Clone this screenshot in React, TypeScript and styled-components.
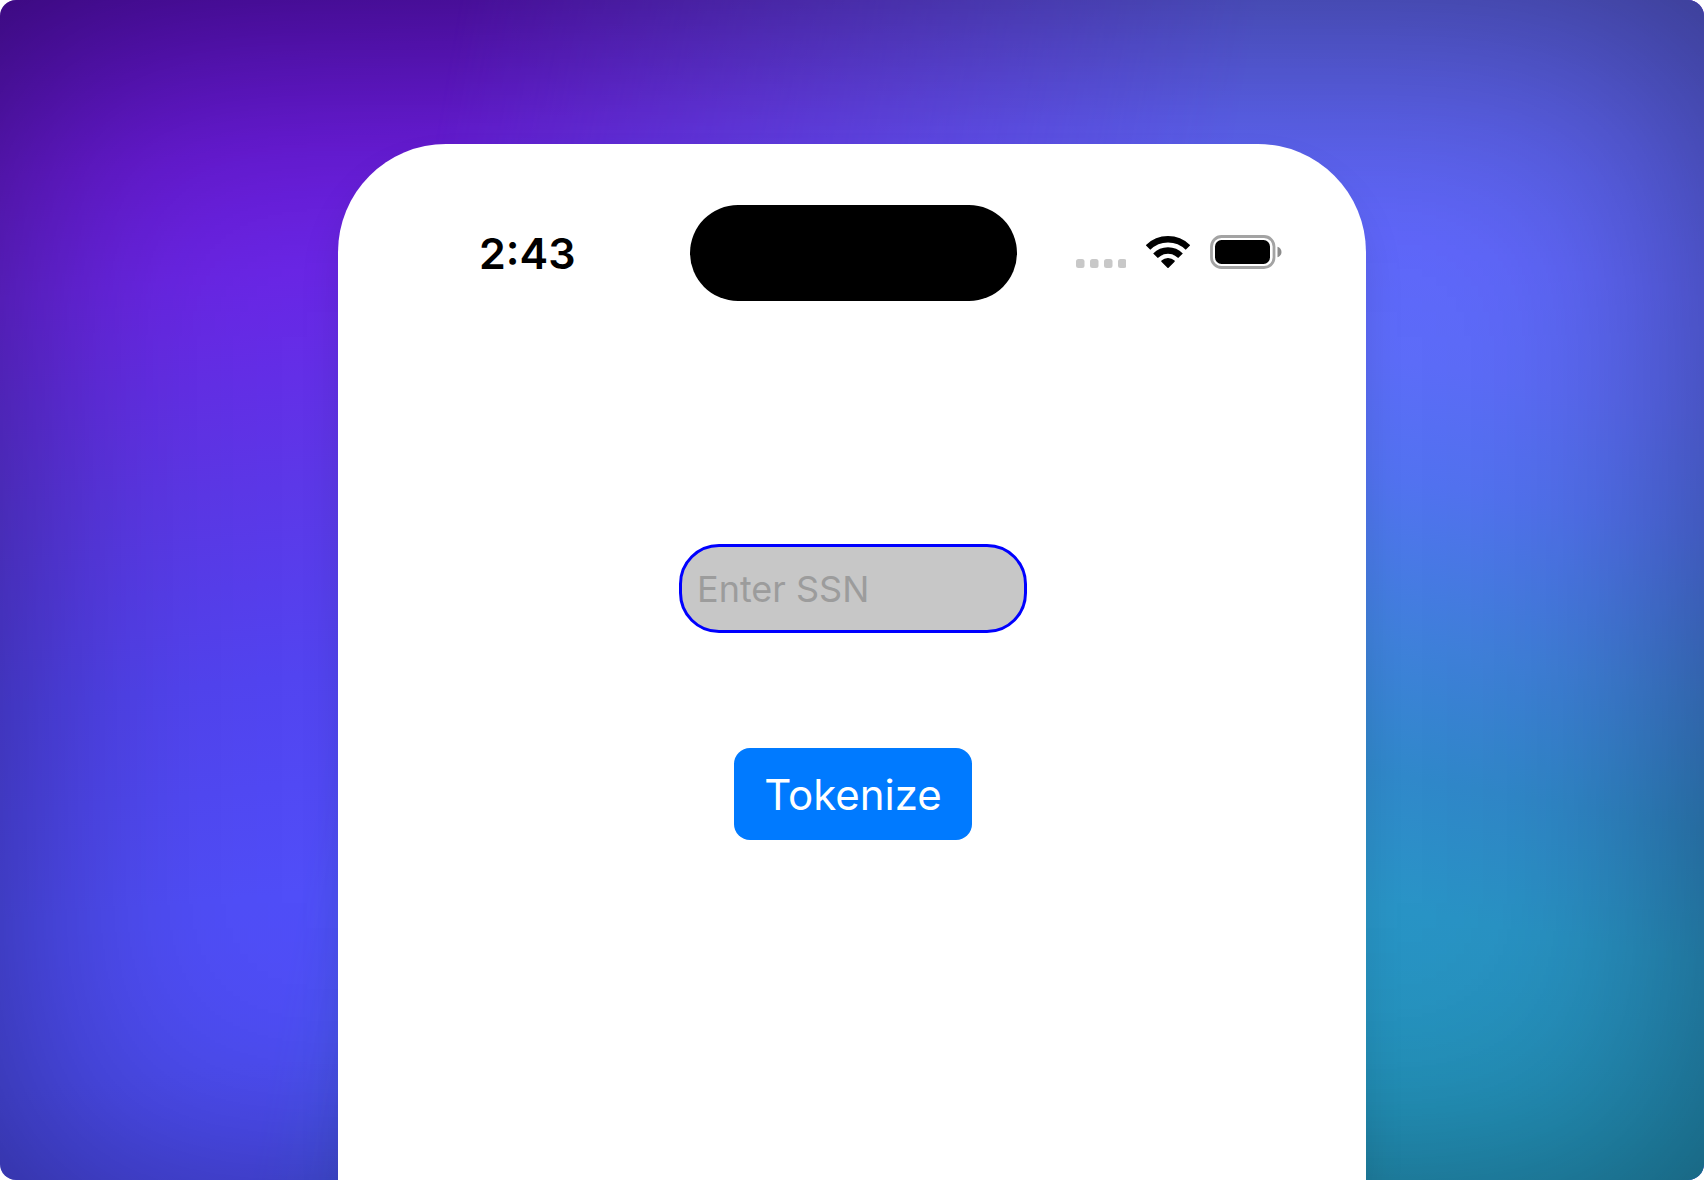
import React, { useState } from "react";
import styled, { createGlobalStyle } from "styled-components";

const GlobalStyle = createGlobalStyle`
  *, *::before, *::after { box-sizing: border-box; }
  html { background: #fff; }
  body { margin: 0; font-family: Inter, "Noto Sans", sans-serif; }
`;

const Stage = styled.div`
  position: relative;
  isolation: isolate;
  display: flex;
  justify-content: center;
  min-height: 100vh;
  padding-top: 144px;
  border-radius: 16px;
  overflow: hidden;
  background: linear-gradient(
    174deg,
    #5c10c4 0%,
    #6a1cdc 13%,
    #6a26e6 22%,
    #5c38e8 38%,
    #5244f0 52%,
    #504ef8 68%,
    #4f4ff8 80%,
    #4b49f0 100%
  );

  /* blue to teal half, faded in from the left */
  &::before {
    content: "";
    position: absolute;
    inset: 0;
    z-index: -2;
    background: linear-gradient(
      190deg,
      #5e62ea 0%,
      #6068fc 20%,
      #5c6cf8 28%,
      #5272f0 36%,
      #3f80da 47%,
      #3088ca 56%,
      #2994c6 65%,
      #2495be 78%,
      #228eae 100%
    );
    mask-image: linear-gradient(100deg, transparent 24%, #000 66%);
  }

  /* darkened edges */
  &::after {
    content: "";
    position: absolute;
    inset: 0;
    z-index: -1;
    box-shadow: inset 0 30px 380px rgba(0, 0, 0, 0.42);
  }
`;

const Phone = styled.main`
  display: flex;
  flex-direction: column;
  width: 100%;
  max-width: 1028px;
  padding: 61px 0 0 2px;
  border-radius: 108px 108px 0 0;
  background: #fff;
  box-shadow: 0 24px 40px rgba(0, 0, 0, 0.1);
`;

const StatusBar = styled.header`
  display: grid;
  grid-template-columns: 1fr auto 1fr;
  align-items: center;
`;

const Time = styled.time`
  padding-left: 139px;
  color: #000;
  font-size: 43px;
  font-weight: 600;
  line-height: 52px;
`;

const Island = styled.div`
  width: 327px;
  height: 96px;
  border-radius: 48px;
  background: #000;
`;

const StatusIcons = styled.div`
  display: flex;
  align-items: center;
  justify-content: flex-end;
  gap: 20px;
  padding: 0 84px 2px 0;

  svg { display: block; flex: none; }
`;

const Form = styled.form`
  display: flex;
  flex-direction: column;
  align-items: center;
  gap: 115px;
  padding: 243px 24px 96px;
`;

const SsnInput = styled.input`
  width: 348px;
  max-width: 100%;
  height: 89px;
  padding: 0 15px;
  border: 3px solid #0000ff;
  border-radius: 40px;
  outline: none;
  background: #c7c7c7;
  color: #000;
  font-family: inherit;
  font-size: 36px;

  &::placeholder { color: #9c9c9c; opacity: 1; }
`;

const TokenizeButton = styled.button`
  width: 238px;
  height: 92px;
  padding: 0;
  border: 0;
  border-radius: 16px;
  background: #007aff;
  color: #fff;
  font-family: inherit;
  font-size: 42px;
  cursor: pointer;
`;

const SignalDots = () => (
  <svg width="50" height="34" viewBox="0 0 50 34" aria-hidden="true">
    {[0, 14, 28, 42].map((x) => (
      <rect key={x} x={x} y="24" width="8.5" height="9" rx="2.5" fill="#c8c8c8" />
    ))}
  </svg>
);

const Wifi = () => (
  <svg width="44" height="34" viewBox="0 0 44 34" aria-hidden="true">
    <g fill="none" stroke="#000" strokeWidth="6.5">
      <path d="M2 12.5A28.3 28.3 0 0 1 42 12.5" />
      <path d="M9.5 20.8A17.5 17.5 0 0 1 34.5 20.8" />
    </g>
    <path
      d="M16 26.2A8.8 8.8 0 0 1 28 26.2L22 32.2Z"
      stroke="#000"
      strokeWidth="1.6"
      strokeLinejoin="round"
    />
  </svg>
);

const Battery = () => (
  <svg width="72" height="34" viewBox="0 0 72 34" aria-hidden="true">
    <rect x="1.5" y="1.5" width="62.5" height="31" rx="10" fill="none" stroke="#a3a3a3" strokeWidth="2.8" />
    <rect x="5" y="5" width="55" height="24" rx="6.5" />
    <path d="M67.5 11.7C70 12.5 71.5 14.5 71.5 17S70 21.5 67.5 22.3Z" fill="#8c8c8c" />
  </svg>
);

export default function App() {
  const [ssn, setSsn] = useState("");

  return (
    <>
      <GlobalStyle />
      <Stage>
        <Phone>
          <StatusBar>
            <Time>2:43</Time>
            <Island />
            <StatusIcons>
              <SignalDots />
              <Wifi />
              <Battery />
            </StatusIcons>
          </StatusBar>
          <Form onSubmit={(e) => e.preventDefault()}>
            <SsnInput
              type="text"
              inputMode="numeric"
              placeholder="Enter SSN"
              aria-label="Enter SSN"
              value={ssn}
              onChange={(e) => setSsn(e.target.value)}
            />
            <TokenizeButton type="submit">Tokenize</TokenizeButton>
          </Form>
        </Phone>
      </Stage>
    </>
  );
}
